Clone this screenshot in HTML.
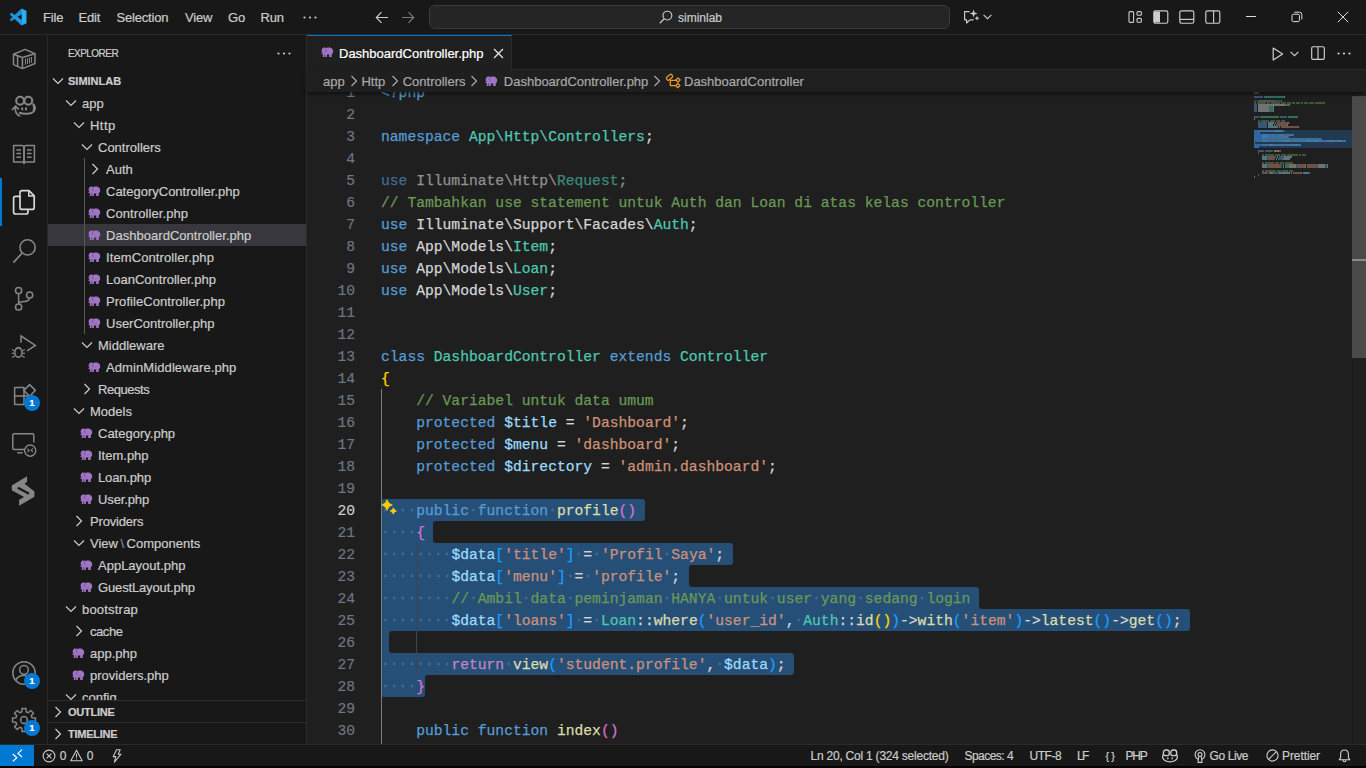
<!DOCTYPE html>
<html lang="en"><head><meta charset="utf-8"><title>DashboardController.php - siminlab - Visual Studio Code</title>
<style>
*{box-sizing:border-box;margin:0;padding:0}
html,body{width:1366px;height:768px;overflow:hidden;background:#000}
body{font-family:"Liberation Sans",sans-serif;font-size:13px;color:#cccccc;position:relative;-webkit-text-stroke:0.2px currentColor}
.a{position:absolute}
svg{display:block;overflow:visible}
#title{position:absolute;left:0;top:0;width:1366px;height:35px;background:#181818;border-bottom:1px solid #2b2b2b}
#activity{position:absolute;left:0;top:35px;width:48px;height:709px;background:#181818;border-right:1px solid #2b2b2b}
#side{position:absolute;left:48px;top:35px;width:259px;height:709px;background:#181818;border-right:1px solid #2b2b2b;overflow:hidden}
#tabs{position:absolute;left:307px;top:35px;width:1059px;height:35px;background:#181818;border-bottom:1px solid #2b2b2b}
#crumbs{position:absolute;left:307px;top:70px;width:1059px;height:22px;background:#1f1f1f;z-index:5;color:#a9a9a9;box-shadow:0 3px 4px -1px rgba(0,0,0,.55)}
#editor{position:absolute;left:307px;top:92px;width:1059px;height:652px;background:#1f1f1f;overflow:hidden}
#status{position:absolute;left:0;top:744px;width:1366px;height:22px;background:#181818;border-top:1px solid #2b2b2b;font-size:12px;color:#cccccc}
.menu{position:absolute;top:0;height:35px;line-height:35px;font-size:13px;color:#cccccc;white-space:nowrap;letter-spacing:-0.18px}
.row{position:absolute;left:0;width:258px;height:22px;line-height:22px;white-space:nowrap;color:#cccccc;font-size:13px}
.row .t{position:absolute;top:1px}
.row svg{position:absolute}
.ln{-webkit-text-stroke:0.2px currentColor;position:absolute;left:0;width:48px;text-align:right;height:22px;line-height:22px;color:#6e7681;font-family:"Liberation Mono",monospace;font-size:14.66px}
.cl{-webkit-text-stroke:0.25px currentColor;position:absolute;left:74px;height:22px;line-height:22px;white-space:pre;font-family:"Liberation Mono",monospace;font-size:14.66px;color:#d4d4d4}
.sel{position:absolute;background:#264f78;height:22px}
.k{color:#569cd6}.c{color:#4ec9b0}.v{color:#9cdcfe}.s{color:#ce9178}.m{color:#6a9955}.f{color:#dcdcaa}.r{color:#c586c0}
.b1{color:#ffd700}.b2{color:#da70d6}.b3{color:#179fff}
.w{color:rgba(255,255,255,.16);font-weight:bold;position:relative;top:-1px}
.st{position:absolute;top:1px;height:21px;line-height:21px;white-space:nowrap}
</style></head>
<body>

<svg width="0" height="0" style="position:absolute"><defs>
<symbol id="php" viewBox="0 0 24 20"><path d="M4 1.5 C6.5 0.3 9 0.8 10.5 2 C13 0.8 17 0.8 19.5 2 C22.5 3.5 24 6.5 23.6 9.5 C23.4 11.5 22 13 20.8 13.6 L20.7 19.4 L15.7 19.4 L15.7 14.6 L11.4 14.6 L11.3 19.4 L7.9 19.4 L7.9 14.4 L6.8 14.2 L6.7 19.4 L3.4 19.4 L3.4 13 C2.4 13.4 1.2 13.4 0.4 12.6 L1.2 11.2 C1.8 11.6 2.4 11.4 2.6 10.8 C0.6 8.8 0.2 4.5 4 1.5 Z"/><path d="M10.6 2.6 C7.6 4.6 7.6 8.6 11 9" fill="none" stroke="#181818" stroke-opacity=".5" stroke-width="1.1"/></symbol>
<symbol id="cd" viewBox="0 0 16 16"><path d="M3 5.5 L8 10.5 L13 5.5" fill="none" stroke="currentColor" stroke-width="1.2"/></symbol>
<symbol id="cr" viewBox="0 0 16 16"><path d="M5.5 3 L10.5 8 L5.5 13" fill="none" stroke="currentColor" stroke-width="1.2"/></symbol>
</defs></svg>

<div id="title"><svg class="a" style="left:9px;top:8px" width="18" height="18" viewBox="0 0 18 18">
<path d="M0.9 11.7 L2.3 13.1 L12.9 5.8 L12.9 0.9 L12 1.3 Z" fill="#1f8fd8" stroke="#1f8fd8" stroke-width=".5" stroke-linejoin="round"/>
<path d="M2.3 4.9 L0.9 6.3 L12 16.7 L12.9 17.05 L12.9 12.3 Z" fill="#2197e2" stroke="#2197e2" stroke-width=".5" stroke-linejoin="round"/>
<path d="M12.9 0.9 L17.2 2.9 L17.2 15.2 L12.9 17.05 Z" fill="#2bacf6" stroke="#2bacf6" stroke-width=".5" stroke-linejoin="round"/></svg><div class="menu" style="left:43px">File</div><div class="menu" style="left:78.5px">Edit</div><div class="menu" style="left:116.5px">Selection</div><div class="menu" style="left:185px">View</div><div class="menu" style="left:228px">Go</div><div class="menu" style="left:260.5px">Run</div><svg class="a" style="left:303px;top:16px" width="14" height="3" viewBox="0 0 14 3"><circle cx="1.5" cy="1.5" r="1.1" fill="#ccc"/><circle cx="7" cy="1.5" r="1.1" fill="#ccc"/><circle cx="12.5" cy="1.5" r="1.1" fill="#ccc"/></svg><svg class="a" style="left:375px;top:11px" width="14" height="13" viewBox="0 0 14 13"><path d="M13 6.5 H1.5 M6.5 1.2 L1.3 6.5 L6.5 11.8" fill="none" stroke="#cccccc" stroke-width="1.15"/></svg><svg class="a" style="left:401px;top:11px" width="14" height="13" viewBox="0 0 14 13"><path d="M1 6.5 H12.5 M7.5 1.2 L12.7 6.5 L7.5 11.8" fill="none" stroke="#7a7a7a" stroke-width="1.15"/></svg><div class="a" style="left:429px;top:5px;width:521px;height:24px;border:1px solid #3a3a3a;border-radius:6px;background:#252525"></div><svg class="a" style="left:659px;top:10px" width="14" height="14" viewBox="0 0 14 14"><circle cx="8.4" cy="5.6" r="4.4" fill="none" stroke="#c8c8c8" stroke-width="1.15"/><path d="M5.2 8.8 L0.8 13.2" stroke="#c8c8c8" stroke-width="1.25" fill="none"/></svg><div class="a" style="left:678px;top:1px;height:35px;line-height:35px;font-size:12px;color:#cccccc" id="cc">siminlab</div><svg class="a" style="left:963px;top:9px" width="17" height="16" viewBox="0 0 17 16">
<path d="M6.5 2.6 H1.6 V10.8 H3.6 V14 L7 10.8 H10.6" fill="none" stroke="#cccccc" stroke-width="1.15" stroke-linejoin="round"/>
<path d="M10.6 0.4 L11.6 3.4 L14.6 4.4 L11.6 5.4 L10.6 8.4 L9.6 5.4 L6.6 4.4 L9.6 3.4 Z" fill="#cccccc"/>
<path d="M14 6.6 L14.7 8.5 L16.6 9.2 L14.7 9.9 L14 11.8 L13.3 9.9 L11.4 9.2 L13.3 8.5 Z" fill="#cccccc"/></svg><svg class="a" style="left:983px;top:14px" width="9" height="6" viewBox="0 0 9 6"><path d="M0.6 0.8 L4.5 4.7 L8.4 0.8" fill="none" stroke="#cccccc" stroke-width="1.1"/></svg><svg class="a" style="left:1128px;top:10px" width="15" height="14" viewBox="0 0 15 14"><rect x="1" y="1.6" width="4.6" height="10.8" rx="1" fill="none" stroke="#cccccc" stroke-width="1.1"/><rect x="9" y="1.6" width="4.4" height="3.6" rx="1" fill="none" stroke="#cccccc" stroke-width="1.1"/><rect x="9" y="8.4" width="4.4" height="3.8" rx="1" fill="none" stroke="#cccccc" stroke-width="1.1"/></svg><svg class="a" style="left:1153px;top:10px" width="16" height="14" viewBox="0 0 16 14"><rect x="0.8" y="0.8" width="14" height="12.4" rx="1.6" fill="none" stroke="#cccccc" stroke-width="1.15"/><path d="M1 1.5 H7 V12.5 H1 Z" fill="#cccccc"/></svg><svg class="a" style="left:1179px;top:10px" width="16" height="14" viewBox="0 0 16 14"><rect x="0.8" y="0.8" width="14" height="12.4" rx="1.6" fill="none" stroke="#cccccc" stroke-width="1.15"/><path d="M1 9.4 H15" stroke="#cccccc" stroke-width="1.15"/></svg><svg class="a" style="left:1205px;top:10px" width="16" height="14" viewBox="0 0 16 14"><rect x="0.8" y="0.8" width="14" height="12.4" rx="1.6" fill="none" stroke="#cccccc" stroke-width="1.15"/><path d="M8.6 1 V13" stroke="#cccccc" stroke-width="1.15"/></svg><div class="a" style="left:1246px;top:16px;width:10px;height:1px;background:#dddddd"></div><svg class="a" style="left:1291px;top:11px" width="12" height="12" viewBox="0 0 12 12"><rect x="1" y="3.2" width="7.4" height="7.4" rx="1.3" fill="none" stroke="#dddddd" stroke-width="1"/><path d="M3.4 1.2 H8.6 Q10.8 1.2 10.8 3.4 V8.4" fill="none" stroke="#dddddd" stroke-width="1"/></svg><svg class="a" style="left:1337px;top:11px" width="12" height="12" viewBox="0 0 12 12"><path d="M0.8 0.8 L11.2 11.2 M11.2 0.8 L0.8 11.2" stroke="#dddddd" stroke-width="1" fill="none"/></svg></div>
<div id="activity"><svg class="a" style="left:12px;top:13px" width="24" height="22" viewBox="0 0 24 22">
<path d="M1.5 6.2 L13.1 1.4 L23 5.7 L23 15.5 L10.4 20.6 L1.5 16.6 Z" fill="none" stroke="#868686" stroke-width="1.5" stroke-linejoin="round"/>
<path d="M1.5 6.2 L10.4 9.4 L23 5.7 M10.4 9.4 V20.6" fill="none" stroke="#868686" stroke-width="1.6" stroke-linejoin="round"/>
<path d="M5.6 8 V18.2" stroke="#868686" stroke-width="1.5"/>
<path d="M13.5 10.8 V16.8 M15.5 10.2 V16.1 M17.5 9.6 V15.4 M19.5 9 V14.7" stroke="#868686" stroke-width="1.05"/></svg><svg class="a" style="left:11px;top:59px" width="25" height="25" viewBox="0 0 25 25">
<circle cx="9.1" cy="6.7" r="3.9" fill="none" stroke="#868686" stroke-width="2.1"/>
<circle cx="17.3" cy="6.7" r="3.9" fill="none" stroke="#868686" stroke-width="2.1"/>
<path d="M21.6 9.6 C24.4 11.4 24.2 15.6 22.6 17.6 C20.4 20 13.6 20.6 8 18.8" fill="none" stroke="#868686" stroke-width="2"/>
<path d="M22.4 11 C23.6 12.6 23.6 15.2 22.4 16.8" fill="none" stroke="#868686" stroke-width="2.4"/>
<path d="M11.2 13.4 V16.2 M15 13.4 V16.2" stroke="#868686" stroke-width="2"/>
<path d="M4.5 12.8 C3.8 17 5.2 20.8 9.4 22" fill="none" stroke="#868686" stroke-width="1.7"/>
<path d="M1 16 L4.4 12.3 L7.9 15.3" fill="none" stroke="#868686" stroke-width="1.7"/></svg><svg class="a" style="left:12px;top:108px" width="24" height="23" viewBox="0 0 24 23">
<path d="M1.6 2.4 H10 Q12 2.4 12 4.4 V20.6 Q12 19 10 19 H1.6 Z" fill="none" stroke="#868686" stroke-width="1.5" stroke-linejoin="round"/>
<path d="M22.4 2.4 H14 Q12 2.4 12 4.4 V20.6 Q12 19 14 19 H22.4 Z" fill="none" stroke="#868686" stroke-width="1.5" stroke-linejoin="round"/>
<path d="M4.4 7 H9 M4.4 10.6 H9 M4.4 14.2 H9 M15 7 H19.6 M15 10.6 H19.6 M15 14.2 H19.6" stroke="#868686" stroke-width="1.5"/></svg><div class="a" style="left:0;top:143px;width:2px;height:48px;background:#0078d4"></div><svg class="a" style="left:12px;top:154px" width="24" height="27" viewBox="0 0 24 27">
<path d="M8 5.6 V3.6 Q8 1.6 10 1.6 H17 L22.2 6.8 V18.4 Q22.2 20.4 20.2 20.4 H16.4" fill="none" stroke="#d7d7d7" stroke-width="1.7" stroke-linejoin="round"/>
<path d="M16.8 1.8 V7 H22" fill="none" stroke="#d7d7d7" stroke-width="1.5"/>
<path d="M3.6 7.4 H8 V18.4 Q8 20.4 10 20.4 H16 V23 Q16 25 14 25 H3.6 Q1.6 25 1.6 23 V9.4 Q1.6 7.4 3.6 7.4 Z" fill="none" stroke="#d7d7d7" stroke-width="1.7" stroke-linejoin="round"/>
<path d="M8 7.4 V5.6" stroke="#d7d7d7" stroke-width="1.7"/></svg><svg class="a" style="left:12px;top:203px" width="25" height="26" viewBox="0 0 25 26">
<circle cx="15.6" cy="9.4" r="7.6" fill="none" stroke="#868686" stroke-width="1.6"/>
<path d="M10.2 15 L1.4 24.6" stroke="#868686" stroke-width="1.7" fill="none"/></svg><svg class="a" style="left:14px;top:251px" width="20" height="26" viewBox="0 0 20 26">
<circle cx="4.6" cy="4.6" r="3.1" fill="none" stroke="#868686" stroke-width="1.5"/>
<circle cx="4.6" cy="21" r="3.1" fill="none" stroke="#868686" stroke-width="1.5"/>
<circle cx="15.6" cy="9" r="3.1" fill="none" stroke="#868686" stroke-width="1.5"/>
<path d="M4.6 7.8 V17.8 M15.4 12.2 Q14.6 15.4 10 15.6 Q5.4 15.8 4.8 17.8" fill="none" stroke="#868686" stroke-width="1.5"/></svg><svg class="a" style="left:11px;top:299px" width="26" height="26" viewBox="0 0 26 26">
<path d="M10 8.8 V2 L24.4 11.4 L16 16.8" fill="none" stroke="#868686" stroke-width="1.5" stroke-linejoin="miter"/>
<ellipse cx="7.4" cy="18.6" rx="3.6" ry="4.6" fill="none" stroke="#868686" stroke-width="1.5"/>
<path d="M4.6 15 Q7.4 11.8 10.2 15" fill="none" stroke="#868686" stroke-width="1.4"/>
<path d="M3.8 17 L1 15.4 M3.6 19.4 H0.8 M4 21.8 L1.2 23.6 M11 17 L13.8 15.4 M11.2 19.4 H14 M10.8 21.8 L13.6 23.6" stroke="#868686" stroke-width="1.2"/></svg><svg class="a" style="left:13px;top:348px" width="24" height="24" viewBox="0 0 24 24">
<path d="M1.6 4.6 H11 V21.4 H1.6 Z M1.6 13 H11 M11 13 H19.4 V21.4 H11" fill="none" stroke="#868686" stroke-width="1.5" stroke-linejoin="round"/>
<path d="M16.6 1.6 L22.4 7.4 L16.6 13.2 L10.8 7.4 Z" fill="#181818" stroke="#868686" stroke-width="1.5" stroke-linejoin="round"/></svg><div class="a" style="left:24px;top:360px;width:16px;height:16px;border-radius:8px;background:#0078d4"></div><div class="a" style="left:24px;top:360px;width:16px;height:16px;line-height:16px;text-align:center;font-size:9.5px;font-weight:bold;color:#fff">1</div><svg class="a" style="left:11px;top:397px" width="26" height="26" viewBox="0 0 26 26">
<path d="M14 17.6 H3.2 Q1.8 17.6 1.8 16.2 V3.2 Q1.8 1.8 3.2 1.8 H21.4 Q22.8 1.8 22.8 3.2 V10.4" fill="none" stroke="#868686" stroke-width="1.5"/>
<path d="M6.2 20.8 H11.6" stroke="#868686" stroke-width="1.5"/>
<circle cx="19.2" cy="18.6" r="5.6" fill="#181818" stroke="#868686" stroke-width="1.4"/>
<path d="M16.4 16.6 L18.2 18.4 L16.4 20.2 M22 16.4 L20.2 18.2 L22 20" fill="none" stroke="#868686" stroke-width="1.1"/></svg><svg class="a" style="left:11px;top:440px" width="25" height="32" viewBox="0 0 25 32">
<path d="M16.06 1.29 L0.74 10.59 L0.74 15.24 L13.05 22.08 L8.13 24.81 L8.13 30.83 L23.45 21.8 L23.45 16.6 L13.6 8.68 L16.06 6.76 Z" fill="#868686"/>
<path d="M6.9 12.7 L18 18.8" stroke="#181818" stroke-width="2.3"/></svg><svg class="a" style="left:11px;top:624.5px" width="26" height="26" viewBox="0 0 26 26">
<circle cx="13" cy="13" r="11.2" fill="none" stroke="#868686" stroke-width="1.5"/>
<circle cx="13" cy="9.8" r="4.4" fill="none" stroke="#868686" stroke-width="1.5"/>
<path d="M4.8 20.8 Q6 15.4 13 15.4 Q20 15.4 21.2 20.8" fill="none" stroke="#868686" stroke-width="1.5"/></svg><div class="a" style="left:24px;top:638px;width:16px;height:16px;border-radius:8px;background:#0078d4"></div><div class="a" style="left:24px;top:638px;width:16px;height:16px;line-height:16px;text-align:center;font-size:9.5px;font-weight:bold;color:#fff">1</div><svg class="a" style="left:11px;top:672px" width="26" height="26" viewBox="0 0 26 26"><path d="M10.84 4.88 L11.04 1.57 L14.96 1.57 L15.16 4.88 L17.21 5.73 L19.70 3.53 L22.47 6.30 L20.27 8.79 L21.12 10.84 L24.43 11.04 L24.43 14.96 L21.12 15.16 L20.27 17.21 L22.47 19.70 L19.70 22.47 L17.21 20.27 L15.16 21.12 L14.96 24.43 L11.04 24.43 L10.84 21.12 L8.79 20.27 L6.30 22.47 L3.53 19.70 L5.73 17.21 L4.88 15.16 L1.57 14.96 L1.57 11.04 L4.88 10.84 L5.73 8.79 L3.53 6.30 L6.30 3.53 L8.79 5.73 Z" fill="none" stroke="#868686" stroke-width="1.5" stroke-linejoin="round"/><circle cx="13" cy="13" r="3.4" fill="none" stroke="#868686" stroke-width="1.5"/></svg><div class="a" style="left:24px;top:685px;width:16px;height:16px;border-radius:8px;background:#0078d4"></div><div class="a" style="left:24px;top:685px;width:16px;height:16px;line-height:16px;text-align:center;font-size:9.5px;font-weight:bold;color:#fff">1</div></div>
<div id="side"><div class="a" style="left:20px;top:0;height:35px;line-height:37px;font-size:10px;letter-spacing:-0.55px;color:#cccccc" id="explbl">EXPLORER</div><svg class="a" style="left:229px;top:17px" width="14" height="3" viewBox="0 0 14 3"><circle cx="1.5" cy="1.5" r="1.1" fill="#ccc"/><circle cx="7" cy="1.5" r="1.1" fill="#ccc"/><circle cx="12.5" cy="1.5" r="1.1" fill="#ccc"/></svg><div class="row" style="top:35px;"><svg style="left:2px;top:3px;color:#cccccc" width="16" height="16"><use href="#cd"/></svg><span class="t" style="left:20px;top:0;font-weight:bold;font-size:11px">SIMINLAB</span></div><div class="row" style="top:57px;"><svg style="left:15px;top:3px;color:#cccccc" width="16" height="16"><use href="#cd"/></svg><span class="t" style="left:34px;letter-spacing:0px">app</span></div><div class="row" style="top:79px;"><svg style="left:23px;top:3px;color:#cccccc" width="16" height="16"><use href="#cd"/></svg><span class="t" style="left:42px;letter-spacing:0.45px">Http</span></div><div class="row" style="top:101px;"><svg style="left:31px;top:3px;color:#cccccc" width="16" height="16"><use href="#cd"/></svg><span class="t" style="left:50px;letter-spacing:0px">Controllers</span></div><div class="row" style="top:123px;"><svg style="left:39px;top:3px;color:#cccccc" width="16" height="16"><use href="#cr"/></svg><span class="t" style="left:58px;letter-spacing:0px">Auth</span></div><div class="row" style="top:145px;"><svg style="left:40px;top:6px" width="12.5" height="10.4" fill="#a074c4"><use href="#php"/></svg><span class="t" style="left:58px;letter-spacing:0px">CategoryController.php</span></div><div class="row" style="top:167px;"><svg style="left:40px;top:6px" width="12.5" height="10.4" fill="#a074c4"><use href="#php"/></svg><span class="t" style="left:58px;letter-spacing:0.086px">Controller.php</span></div><div class="row" style="top:189px;background:#37373d;"><svg style="left:40px;top:6px" width="12.5" height="10.4" fill="#a074c4"><use href="#php"/></svg><span class="t" style="left:58px;letter-spacing:0.035px">DashboardController.php</span></div><div class="row" style="top:211px;"><svg style="left:40px;top:6px" width="12.5" height="10.4" fill="#a074c4"><use href="#php"/></svg><span class="t" style="left:58px;letter-spacing:0.1px">ItemController.php</span></div><div class="row" style="top:233px;"><svg style="left:40px;top:6px" width="12.5" height="10.4" fill="#a074c4"><use href="#php"/></svg><span class="t" style="left:58px;letter-spacing:0px">LoanController.php</span></div><div class="row" style="top:255px;"><svg style="left:40px;top:6px" width="12.5" height="10.4" fill="#a074c4"><use href="#php"/></svg><span class="t" style="left:58px;letter-spacing:0.057px">ProfileController.php</span></div><div class="row" style="top:277px;"><svg style="left:40px;top:6px" width="12.5" height="10.4" fill="#a074c4"><use href="#php"/></svg><span class="t" style="left:58px;letter-spacing:0px">UserController.php</span></div><div class="row" style="top:299px;"><svg style="left:31px;top:3px;color:#cccccc" width="16" height="16"><use href="#cd"/></svg><span class="t" style="left:50px;letter-spacing:0px">Middleware</span></div><div class="row" style="top:321px;"><svg style="left:40px;top:6px" width="12.5" height="10.4" fill="#a074c4"><use href="#php"/></svg><span class="t" style="left:58px;letter-spacing:0.095px">AdminMiddleware.php</span></div><div class="row" style="top:343px;"><svg style="left:31px;top:3px;color:#cccccc" width="16" height="16"><use href="#cr"/></svg><span class="t" style="left:50px;letter-spacing:-0.45px">Requests</span></div><div class="row" style="top:365px;"><svg style="left:23px;top:3px;color:#cccccc" width="16" height="16"><use href="#cd"/></svg><span class="t" style="left:42px;letter-spacing:0px">Models</span></div><div class="row" style="top:387px;"><svg style="left:32px;top:6px" width="12.5" height="10.4" fill="#a074c4"><use href="#php"/></svg><span class="t" style="left:50px;letter-spacing:0px">Category.php</span></div><div class="row" style="top:409px;"><svg style="left:32px;top:6px" width="12.5" height="10.4" fill="#a074c4"><use href="#php"/></svg><span class="t" style="left:50px;letter-spacing:0px">Item.php</span></div><div class="row" style="top:431px;"><svg style="left:32px;top:6px" width="12.5" height="10.4" fill="#a074c4"><use href="#php"/></svg><span class="t" style="left:50px;letter-spacing:-0.15px">Loan.php</span></div><div class="row" style="top:453px;"><svg style="left:32px;top:6px" width="12.5" height="10.4" fill="#a074c4"><use href="#php"/></svg><span class="t" style="left:50px;letter-spacing:-0.125px">User.php</span></div><div class="row" style="top:475px;"><svg style="left:23px;top:3px;color:#cccccc" width="16" height="16"><use href="#cr"/></svg><span class="t" style="left:42px;letter-spacing:-0.178px">Providers</span></div><div class="row" style="top:497px;"><svg style="left:23px;top:3px;color:#cccccc" width="16" height="16"><use href="#cd"/></svg><span class="t" style="left:42px;letter-spacing:0px">View<span style="color:#8a8a8a;padding:0 2.5px">\</span>Components</span></div><div class="row" style="top:519px;"><svg style="left:32px;top:6px" width="12.5" height="10.4" fill="#a074c4"><use href="#php"/></svg><span class="t" style="left:50px;letter-spacing:0px">AppLayout.php</span></div><div class="row" style="top:541px;"><svg style="left:32px;top:6px" width="12.5" height="10.4" fill="#a074c4"><use href="#php"/></svg><span class="t" style="left:50px;letter-spacing:-0.147px">GuestLayout.php</span></div><div class="row" style="top:563px;"><svg style="left:15px;top:3px;color:#cccccc" width="16" height="16"><use href="#cd"/></svg><span class="t" style="left:34px;letter-spacing:0.2px">bootstrap</span></div><div class="row" style="top:585px;"><svg style="left:23px;top:3px;color:#cccccc" width="16" height="16"><use href="#cr"/></svg><span class="t" style="left:42px;letter-spacing:-0.44px">cache</span></div><div class="row" style="top:607px;"><svg style="left:24px;top:6px" width="12.5" height="10.4" fill="#a074c4"><use href="#php"/></svg><span class="t" style="left:42px;letter-spacing:0px">app.php</span></div><div class="row" style="top:629px;"><svg style="left:24px;top:6px" width="12.5" height="10.4" fill="#a074c4"><use href="#php"/></svg><span class="t" style="left:42px;letter-spacing:0px">providers.php</span></div><div class="row" style="top:651px;"><svg style="left:15px;top:3px;color:#cccccc" width="16" height="16"><use href="#cd"/></svg><span class="t" style="left:34px;letter-spacing:0px">config</span></div><div class="a" style="left:36px;top:123px;width:1px;height:176px;background:#585858"></div><div class="a" style="left:0;top:665px;width:258px;height:45px;background:#181818"></div><div class="a" style="left:0;top:665px;width:258px;height:1px;background:#2b2b2b"></div><svg class="a" style="left:2px;top:669px;color:#cccccc" width="16" height="16"><use href="#cr"/></svg><div class="a" style="left:20px;top:666px;height:22px;line-height:22px;font-weight:bold;font-size:11px;letter-spacing:-0.25px;color:#cccccc">OUTLINE</div><div class="a" style="left:0;top:687px;width:258px;height:1px;background:#2b2b2b"></div><svg class="a" style="left:2px;top:691px;color:#cccccc" width="16" height="16"><use href="#cr"/></svg><div class="a" style="left:20px;top:688px;height:22px;line-height:22px;font-weight:bold;font-size:11px;letter-spacing:-0.25px;color:#cccccc">TIMELINE</div></div>
<div id="tabs"><div class="a" style="left:0;top:0;width:205px;height:35px;background:#1f1f1f;border-right:1px solid #2b2b2b;border-top:1px solid #0078d4"></div><svg class="a" style="left:13.5px;top:12px" width="12.5" height="10.4" fill="#a074c4"><use href="#php"/></svg><div class="a" id="tabtxt" style="left:32px;top:1px;height:35px;line-height:36px;font-size:13px;color:#ffffff;white-space:nowrap">DashboardController.php</div><svg class="a" style="left:186px;top:12.5px" width="11" height="11" viewBox="0 0 11 11"><path d="M1 1 L10 10 M10 1 L1 10" stroke="#e6e6e6" stroke-width="1.3" fill="none"/></svg><svg class="a" style="left:965px;top:12px" width="12" height="14" viewBox="0 0 12 14"><path d="M1.2 1 L10.6 7 L1.2 13 Z" fill="none" stroke="#d0d0d0" stroke-width="1.2" stroke-linejoin="round"/></svg><svg class="a" style="left:983px;top:16px" width="9" height="6" viewBox="0 0 9 6"><path d="M0.6 0.8 L4.5 4.7 L8.4 0.8" fill="none" stroke="#d0d0d0" stroke-width="1.1"/></svg><svg class="a" style="left:1003.5px;top:11px" width="14" height="14" viewBox="0 0 14 14"><rect x="0.7" y="0.7" width="12.6" height="12.6" rx="1.4" fill="none" stroke="#d0d0d0" stroke-width="1.15"/><path d="M7 1 V13" stroke="#d0d0d0" stroke-width="1.15"/></svg><svg class="a" style="left:1029.5px;top:17px" width="14" height="3" viewBox="0 0 14 3"><circle cx="1.5" cy="1.5" r="1.1" fill="#d0d0d0"/><circle cx="7" cy="1.5" r="1.1" fill="#d0d0d0"/><circle cx="12.5" cy="1.5" r="1.1" fill="#d0d0d0"/></svg></div><div id="crumbs"><div class="a bc" id="bc0" style="left:16px;top:1px;height:22px;line-height:22px;white-space:nowrap">app</div><svg class="a" style="left:38.5px;top:3px;color:#a9a9a9" width="16" height="16"><use href="#cr"/></svg><div class="a bc" id="bc1" style="left:54.39999999999998px;top:1px;height:22px;line-height:22px;white-space:nowrap">Http</div><svg class="a" style="left:80px;top:3px;color:#a9a9a9" width="16" height="16"><use href="#cr"/></svg><div class="a bc" id="bc2" style="left:95.69999999999999px;top:1px;height:22px;line-height:22px;white-space:nowrap">Controllers</div><svg class="a" style="left:158.5px;top:3px;color:#a9a9a9" width="16" height="16"><use href="#cr"/></svg><svg class="a" style="left:178px;top:6px" width="12.5" height="10.4" fill="#a074c4"><use href="#php"/></svg><div class="a bc" id="bc3" style="left:196.8px;top:1px;height:22px;line-height:22px;white-space:nowrap">DashboardController.php</div><svg class="a" style="left:341.79999999999995px;top:3px;color:#a9a9a9" width="16" height="16"><use href="#cr"/></svg><svg class="a" style="left:357.5px;top:3px" width="17" height="17" viewBox="0 0 17 17"><g fill="none" stroke="#ee9d28" stroke-width="1.25" stroke-linejoin="round">
<rect x="1.2" y="2.5" width="6.6" height="3.5" rx="1.2" transform="rotate(-40 4.5 4.25)"/>
<path d="M13 4.9 L15.1 7 L13 9.1 L10.9 7 Z"/><path d="M12.8 10.5 L14.9 12.6 L12.8 14.7 L10.7 12.6 Z"/>
<path d="M5.3 7.3 V12.6 H10.7 M5.3 7.3 H10.9"/></g></svg><div class="a bc" id="bc4" style="left:377px;top:1px;height:22px;line-height:22px;white-space:nowrap">DashboardController</div></div><div id="editor"><div class="sel" style="left:74px;top:407px;width:263.5px;border-radius:3px 3px 3px 0px"></div><div class="sel" style="left:74px;top:429px;width:52.4px;border-radius:0px 0px 0px 0px"></div><div class="sel" style="left:74px;top:451px;width:351.5px;border-radius:0px 3px 3px 0px"></div><div class="sel" style="left:74px;top:473px;width:307.5px;border-radius:0px 0px 0px 0px"></div><div class="sel" style="left:74px;top:495px;width:597.8px;border-radius:0px 3px 0px 0px"></div><div class="sel" style="left:74px;top:517px;width:808.9px;border-radius:0px 3px 3px 0px"></div><div class="sel" style="left:74px;top:539px;width:8.4px;border-radius:0px 0px 0px 0px"></div><div class="sel" style="left:74px;top:561px;width:413.1px;border-radius:0px 3px 3px 0px"></div><div class="sel" style="left:74px;top:583px;width:44.0px;border-radius:0px 0px 3px 3px"></div><div class="a" style="left:126.4px;top:429px;width:3px;height:3px;background:#264f78"></div><div class="a" style="left:126.4px;top:429px;width:3px;height:3px;background:#1f1f1f;border-top-left-radius:3px"></div><div class="a" style="left:126.4px;top:448px;width:3px;height:3px;background:#264f78"></div><div class="a" style="left:126.4px;top:448px;width:3px;height:3px;background:#1f1f1f;border-bottom-left-radius:3px"></div><div class="a" style="left:381.5px;top:473px;width:3px;height:3px;background:#264f78"></div><div class="a" style="left:381.5px;top:473px;width:3px;height:3px;background:#1f1f1f;border-top-left-radius:3px"></div><div class="a" style="left:381.5px;top:492px;width:3px;height:3px;background:#264f78"></div><div class="a" style="left:381.5px;top:492px;width:3px;height:3px;background:#1f1f1f;border-bottom-left-radius:3px"></div><div class="a" style="left:671.8px;top:514px;width:3px;height:3px;background:#264f78"></div><div class="a" style="left:671.8px;top:514px;width:3px;height:3px;background:#1f1f1f;border-bottom-left-radius:3px"></div><div class="a" style="left:82.4px;top:539px;width:3px;height:3px;background:#264f78"></div><div class="a" style="left:82.4px;top:539px;width:3px;height:3px;background:#1f1f1f;border-top-left-radius:3px"></div><div class="a" style="left:82.4px;top:558px;width:3px;height:3px;background:#264f78"></div><div class="a" style="left:82.4px;top:558px;width:3px;height:3px;background:#1f1f1f;border-bottom-left-radius:3px"></div><div class="a" style="left:118.0px;top:583px;width:3px;height:3px;background:#264f78"></div><div class="a" style="left:118.0px;top:583px;width:3px;height:3px;background:#1f1f1f;border-top-left-radius:3px"></div><div class="a" style="left:74px;top:297px;width:1px;height:440px;background:#7c7c7c"></div><div class="a" style="left:109px;top:451px;width:1px;height:132px;background:#3e4651"></div><div class="a" style="left:109px;top:671px;width:1px;height:220px;background:#404040"></div><svg class="a" style="left:74px;top:407px" width="18" height="17" viewBox="0 0 18 17">
<path d="M6.05 0.75 Q7.09 4.91 11.25 5.95 Q7.09 6.99 6.05 11.15 Q5.01 6.99 0.8499999999999996 5.95 Q5.01 4.91 6.05 0.75 Z" fill="#ffcc00" stroke="#ffcc00" stroke-width="0.9" stroke-linejoin="round"/>
<path d="M12.3 8.8 Q12.940000000000001 11.36 15.5 12.0 Q12.940000000000001 12.64 12.3 15.2 Q11.66 12.64 9.100000000000001 12.0 Q11.66 11.36 12.3 8.8 Z" fill="#ffcc00" stroke="#ffcc00" stroke-width="0.7" stroke-linejoin="round"/></svg><div class="ln" style="top:-10px;color:#6e7681">1</div><div class="cl" style="top:-10px;"><span class="k">&lt;?php</span></div><div class="ln" style="top:12px;color:#6e7681">2</div><div class="ln" style="top:34px;color:#6e7681">3</div><div class="cl" style="top:34px;"><span class="k">namespace</span> <span class="c">App\Http\Controllers</span>;</div><div class="ln" style="top:56px;color:#6e7681">4</div><div class="ln" style="top:78px;color:#6e7681">5</div><div class="cl" style="top:78px;opacity:.62;"><span class="k">use</span> Illuminate\Http\<span class="c">Request</span>;</div><div class="ln" style="top:100px;color:#6e7681">6</div><div class="cl" style="top:100px;"><span class="m">// Tambahkan use statement untuk Auth dan Loan di atas kelas controller</span></div><div class="ln" style="top:122px;color:#6e7681">7</div><div class="cl" style="top:122px;"><span class="k">use</span> Illuminate\Support\Facades\<span class="c">Auth</span>;</div><div class="ln" style="top:144px;color:#6e7681">8</div><div class="cl" style="top:144px;"><span class="k">use</span> App\Models\<span class="c">Item</span>;</div><div class="ln" style="top:166px;color:#6e7681">9</div><div class="cl" style="top:166px;"><span class="k">use</span> App\Models\<span class="c">Loan</span>;</div><div class="ln" style="top:188px;color:#6e7681">10</div><div class="cl" style="top:188px;"><span class="k">use</span> App\Models\<span class="c">User</span>;</div><div class="ln" style="top:210px;color:#6e7681">11</div><div class="ln" style="top:232px;color:#6e7681">12</div><div class="ln" style="top:254px;color:#6e7681">13</div><div class="cl" style="top:254px;"><span class="k">class</span> <span class="c">DashboardController</span> <span class="k">extends</span> <span class="c">Controller</span></div><div class="ln" style="top:276px;color:#6e7681">14</div><div class="cl" style="top:276px;"><span class="b1">{</span></div><div class="ln" style="top:298px;color:#6e7681">15</div><div class="cl" style="top:298px;">    <span class="m">// Variabel untuk data umum</span></div><div class="ln" style="top:320px;color:#6e7681">16</div><div class="cl" style="top:320px;">    <span class="k">protected</span> <span class="v">$title</span> = <span class="s">'Dashboard'</span>;</div><div class="ln" style="top:342px;color:#6e7681">17</div><div class="cl" style="top:342px;">    <span class="k">protected</span> <span class="v">$menu</span> = <span class="s">'dashboard'</span>;</div><div class="ln" style="top:364px;color:#6e7681">18</div><div class="cl" style="top:364px;">    <span class="k">protected</span> <span class="v">$directory</span> = <span class="s">'admin.dashboard'</span>;</div><div class="ln" style="top:386px;color:#6e7681">19</div><div class="ln" style="top:408px;color:#cccccc">20</div><div class="cl" style="top:408px;"><span class="w">·</span><span class="w">·</span><span class="w">·</span><span class="w">·</span><span class="k">public</span><span class="w">·</span><span class="k">function</span><span class="w">·</span><span class="f">profile</span><span class="b2">()</span></div><div class="ln" style="top:430px;color:#6e7681">21</div><div class="cl" style="top:430px;"><span class="w">·</span><span class="w">·</span><span class="w">·</span><span class="w">·</span><span class="b2">{</span></div><div class="ln" style="top:452px;color:#6e7681">22</div><div class="cl" style="top:452px;"><span class="w">·</span><span class="w">·</span><span class="w">·</span><span class="w">·</span><span class="w">·</span><span class="w">·</span><span class="w">·</span><span class="w">·</span><span class="v">$data</span><span class="b3">[</span><span class="s">'title'</span><span class="b3">]</span><span class="w">·</span>=<span class="w">·</span><span class="s">'Profil</span><span class="w">·</span><span class="s">Saya'</span>;</div><div class="ln" style="top:474px;color:#6e7681">23</div><div class="cl" style="top:474px;"><span class="w">·</span><span class="w">·</span><span class="w">·</span><span class="w">·</span><span class="w">·</span><span class="w">·</span><span class="w">·</span><span class="w">·</span><span class="v">$data</span><span class="b3">[</span><span class="s">'menu'</span><span class="b3">]</span><span class="w">·</span>=<span class="w">·</span><span class="s">'profile'</span>;</div><div class="ln" style="top:496px;color:#6e7681">24</div><div class="cl" style="top:496px;"><span class="w">·</span><span class="w">·</span><span class="w">·</span><span class="w">·</span><span class="w">·</span><span class="w">·</span><span class="w">·</span><span class="w">·</span><span class="m">//</span><span class="w">·</span><span class="m">Ambil</span><span class="w">·</span><span class="m">data</span><span class="w">·</span><span class="m">peminjaman</span><span class="w">·</span><span class="m">HANYA</span><span class="w">·</span><span class="m">untuk</span><span class="w">·</span><span class="m">user</span><span class="w">·</span><span class="m">yang</span><span class="w">·</span><span class="m">sedang</span><span class="w">·</span><span class="m">login</span></div><div class="ln" style="top:518px;color:#6e7681">25</div><div class="cl" style="top:518px;"><span class="w">·</span><span class="w">·</span><span class="w">·</span><span class="w">·</span><span class="w">·</span><span class="w">·</span><span class="w">·</span><span class="w">·</span><span class="v">$data</span><span class="b3">[</span><span class="s">'loans'</span><span class="b3">]</span><span class="w">·</span>=<span class="w">·</span><span class="c">Loan</span>::<span class="f">where</span><span class="b3">(</span><span class="s">'user_id'</span>,<span class="w">·</span><span class="c">Auth</span>::<span class="f">id</span><span class="b1">()</span><span class="b3">)</span>-&gt;<span class="f">with</span><span class="b3">(</span><span class="s">'item'</span><span class="b3">)</span>-&gt;<span class="f">latest</span><span class="b3">()</span>-&gt;<span class="f">get</span><span class="b3">()</span>;</div><div class="ln" style="top:540px;color:#6e7681">26</div><div class="ln" style="top:562px;color:#6e7681">27</div><div class="cl" style="top:562px;"><span class="w">·</span><span class="w">·</span><span class="w">·</span><span class="w">·</span><span class="w">·</span><span class="w">·</span><span class="w">·</span><span class="w">·</span><span class="r">return</span><span class="w">·</span><span class="f">view</span><span class="b3">(</span><span class="s">'student.profile'</span>,<span class="w">·</span><span class="v">$data</span><span class="b3">)</span>;</div><div class="ln" style="top:584px;color:#6e7681">28</div><div class="cl" style="top:584px;"><span class="w">·</span><span class="w">·</span><span class="w">·</span><span class="w">·</span><span class="b2">}</span></div><div class="ln" style="top:606px;color:#6e7681">29</div><div class="ln" style="top:628px;color:#6e7681">30</div><div class="cl" style="top:628px;">    <span class="k">public</span> <span class="k">function</span> <span class="f">index</span><span class="b2">()</span></div><div class="ln" style="top:650px;color:#6e7681">31</div><div class="cl" style="top:650px;">    <span class="b2">{</span></div><div class="a" style="left:947px;top:38px;width:98px;height:18px;background:#264f78;opacity:.55"></div><div class="a" style="left:947px;top:0px;width:5px;height:2px;background:#569cd6;opacity:0.45"></div><div class="a" style="left:947px;top:4px;width:9px;height:2px;background:#569cd6;opacity:0.45"></div><div class="a" style="left:957px;top:4px;width:20px;height:2px;background:#4ec9b0;opacity:0.45"></div><div class="a" style="left:977px;top:4px;width:1px;height:2px;background:#d4d4d4;opacity:0.45"></div><div class="a" style="left:947px;top:8px;width:3px;height:2px;background:#569cd6;opacity:0.28"></div><div class="a" style="left:951px;top:8px;width:16px;height:2px;background:#d4d4d4;opacity:0.28"></div><div class="a" style="left:967px;top:8px;width:7px;height:2px;background:#4ec9b0;opacity:0.28"></div><div class="a" style="left:974px;top:8px;width:1px;height:2px;background:#d4d4d4;opacity:0.28"></div><div class="a" style="left:947px;top:10px;width:2px;height:2px;background:#6a9955;opacity:0.45"></div><div class="a" style="left:950px;top:10px;width:9px;height:2px;background:#6a9955;opacity:0.45"></div><div class="a" style="left:960px;top:10px;width:3px;height:2px;background:#6a9955;opacity:0.45"></div><div class="a" style="left:964px;top:10px;width:9px;height:2px;background:#6a9955;opacity:0.45"></div><div class="a" style="left:974px;top:10px;width:5px;height:2px;background:#6a9955;opacity:0.45"></div><div class="a" style="left:980px;top:10px;width:4px;height:2px;background:#6a9955;opacity:0.45"></div><div class="a" style="left:985px;top:10px;width:3px;height:2px;background:#6a9955;opacity:0.45"></div><div class="a" style="left:989px;top:10px;width:4px;height:2px;background:#6a9955;opacity:0.45"></div><div class="a" style="left:994px;top:10px;width:2px;height:2px;background:#6a9955;opacity:0.45"></div><div class="a" style="left:997px;top:10px;width:4px;height:2px;background:#6a9955;opacity:0.45"></div><div class="a" style="left:1002px;top:10px;width:5px;height:2px;background:#6a9955;opacity:0.45"></div><div class="a" style="left:1008px;top:10px;width:10px;height:2px;background:#6a9955;opacity:0.45"></div><div class="a" style="left:947px;top:12px;width:3px;height:2px;background:#569cd6;opacity:0.45"></div><div class="a" style="left:951px;top:12px;width:27px;height:2px;background:#d4d4d4;opacity:0.45"></div><div class="a" style="left:978px;top:12px;width:4px;height:2px;background:#4ec9b0;opacity:0.45"></div><div class="a" style="left:982px;top:12px;width:1px;height:2px;background:#d4d4d4;opacity:0.45"></div><div class="a" style="left:947px;top:14px;width:3px;height:2px;background:#569cd6;opacity:0.45"></div><div class="a" style="left:951px;top:14px;width:11px;height:2px;background:#d4d4d4;opacity:0.45"></div><div class="a" style="left:962px;top:14px;width:4px;height:2px;background:#4ec9b0;opacity:0.45"></div><div class="a" style="left:966px;top:14px;width:1px;height:2px;background:#d4d4d4;opacity:0.45"></div><div class="a" style="left:947px;top:16px;width:3px;height:2px;background:#569cd6;opacity:0.45"></div><div class="a" style="left:951px;top:16px;width:11px;height:2px;background:#d4d4d4;opacity:0.45"></div><div class="a" style="left:962px;top:16px;width:4px;height:2px;background:#4ec9b0;opacity:0.45"></div><div class="a" style="left:966px;top:16px;width:1px;height:2px;background:#d4d4d4;opacity:0.45"></div><div class="a" style="left:947px;top:18px;width:3px;height:2px;background:#569cd6;opacity:0.45"></div><div class="a" style="left:951px;top:18px;width:11px;height:2px;background:#d4d4d4;opacity:0.45"></div><div class="a" style="left:962px;top:18px;width:4px;height:2px;background:#4ec9b0;opacity:0.45"></div><div class="a" style="left:966px;top:18px;width:1px;height:2px;background:#d4d4d4;opacity:0.45"></div><div class="a" style="left:947px;top:24px;width:5px;height:2px;background:#569cd6;opacity:0.45"></div><div class="a" style="left:953px;top:24px;width:19px;height:2px;background:#4ec9b0;opacity:0.45"></div><div class="a" style="left:973px;top:24px;width:7px;height:2px;background:#569cd6;opacity:0.45"></div><div class="a" style="left:981px;top:24px;width:10px;height:2px;background:#4ec9b0;opacity:0.45"></div><div class="a" style="left:947px;top:26px;width:1px;height:2px;background:#ffd700;opacity:0.45"></div><div class="a" style="left:951px;top:28px;width:2px;height:2px;background:#6a9955;opacity:0.45"></div><div class="a" style="left:954px;top:28px;width:8px;height:2px;background:#6a9955;opacity:0.45"></div><div class="a" style="left:963px;top:28px;width:5px;height:2px;background:#6a9955;opacity:0.45"></div><div class="a" style="left:969px;top:28px;width:4px;height:2px;background:#6a9955;opacity:0.45"></div><div class="a" style="left:974px;top:28px;width:4px;height:2px;background:#6a9955;opacity:0.45"></div><div class="a" style="left:951px;top:30px;width:9px;height:2px;background:#569cd6;opacity:0.45"></div><div class="a" style="left:961px;top:30px;width:6px;height:2px;background:#9cdcfe;opacity:0.45"></div><div class="a" style="left:968px;top:30px;width:1px;height:2px;background:#d4d4d4;opacity:0.45"></div><div class="a" style="left:970px;top:30px;width:11px;height:2px;background:#ce9178;opacity:0.45"></div><div class="a" style="left:981px;top:30px;width:1px;height:2px;background:#d4d4d4;opacity:0.45"></div><div class="a" style="left:951px;top:32px;width:9px;height:2px;background:#569cd6;opacity:0.45"></div><div class="a" style="left:961px;top:32px;width:5px;height:2px;background:#9cdcfe;opacity:0.45"></div><div class="a" style="left:967px;top:32px;width:1px;height:2px;background:#d4d4d4;opacity:0.45"></div><div class="a" style="left:969px;top:32px;width:11px;height:2px;background:#ce9178;opacity:0.45"></div><div class="a" style="left:980px;top:32px;width:1px;height:2px;background:#d4d4d4;opacity:0.45"></div><div class="a" style="left:951px;top:34px;width:9px;height:2px;background:#569cd6;opacity:0.45"></div><div class="a" style="left:961px;top:34px;width:10px;height:2px;background:#9cdcfe;opacity:0.45"></div><div class="a" style="left:972px;top:34px;width:1px;height:2px;background:#d4d4d4;opacity:0.45"></div><div class="a" style="left:974px;top:34px;width:17px;height:2px;background:#ce9178;opacity:0.45"></div><div class="a" style="left:991px;top:34px;width:1px;height:2px;background:#d4d4d4;opacity:0.45"></div><div class="a" style="left:947px;top:38px;width:30px;height:2px;background:#2f67a0"></div><div class="a" style="left:951px;top:38px;width:6px;height:2px;background:#569cd6;opacity:0.16"></div><div class="a" style="left:958px;top:38px;width:8px;height:2px;background:#569cd6;opacity:0.16"></div><div class="a" style="left:967px;top:38px;width:7px;height:2px;background:#dcdcaa;opacity:0.16"></div><div class="a" style="left:974px;top:38px;width:2px;height:2px;background:#da70d6;opacity:0.16"></div><div class="a" style="left:947px;top:40px;width:6px;height:2px;background:#2f67a0"></div><div class="a" style="left:951px;top:40px;width:1px;height:2px;background:#da70d6;opacity:0.16"></div><div class="a" style="left:947px;top:42px;width:40px;height:2px;background:#2f67a0"></div><div class="a" style="left:955px;top:42px;width:5px;height:2px;background:#9cdcfe;opacity:0.16"></div><div class="a" style="left:960px;top:42px;width:1px;height:2px;background:#179fff;opacity:0.16"></div><div class="a" style="left:961px;top:42px;width:7px;height:2px;background:#ce9178;opacity:0.16"></div><div class="a" style="left:968px;top:42px;width:1px;height:2px;background:#179fff;opacity:0.16"></div><div class="a" style="left:970px;top:42px;width:1px;height:2px;background:#d4d4d4;opacity:0.16"></div><div class="a" style="left:972px;top:42px;width:7px;height:2px;background:#ce9178;opacity:0.16"></div><div class="a" style="left:980px;top:42px;width:5px;height:2px;background:#ce9178;opacity:0.16"></div><div class="a" style="left:985px;top:42px;width:1px;height:2px;background:#d4d4d4;opacity:0.16"></div><div class="a" style="left:947px;top:44px;width:35px;height:2px;background:#2f67a0"></div><div class="a" style="left:955px;top:44px;width:5px;height:2px;background:#9cdcfe;opacity:0.16"></div><div class="a" style="left:960px;top:44px;width:1px;height:2px;background:#179fff;opacity:0.16"></div><div class="a" style="left:961px;top:44px;width:6px;height:2px;background:#ce9178;opacity:0.16"></div><div class="a" style="left:967px;top:44px;width:1px;height:2px;background:#179fff;opacity:0.16"></div><div class="a" style="left:969px;top:44px;width:1px;height:2px;background:#d4d4d4;opacity:0.16"></div><div class="a" style="left:971px;top:44px;width:9px;height:2px;background:#ce9178;opacity:0.16"></div><div class="a" style="left:980px;top:44px;width:1px;height:2px;background:#d4d4d4;opacity:0.16"></div><div class="a" style="left:947px;top:46px;width:68px;height:2px;background:#2f67a0"></div><div class="a" style="left:955px;top:46px;width:2px;height:2px;background:#6a9955;opacity:0.16"></div><div class="a" style="left:958px;top:46px;width:5px;height:2px;background:#6a9955;opacity:0.16"></div><div class="a" style="left:964px;top:46px;width:4px;height:2px;background:#6a9955;opacity:0.16"></div><div class="a" style="left:969px;top:46px;width:10px;height:2px;background:#6a9955;opacity:0.16"></div><div class="a" style="left:980px;top:46px;width:5px;height:2px;background:#6a9955;opacity:0.16"></div><div class="a" style="left:986px;top:46px;width:5px;height:2px;background:#6a9955;opacity:0.16"></div><div class="a" style="left:992px;top:46px;width:4px;height:2px;background:#6a9955;opacity:0.16"></div><div class="a" style="left:997px;top:46px;width:4px;height:2px;background:#6a9955;opacity:0.16"></div><div class="a" style="left:1002px;top:46px;width:6px;height:2px;background:#6a9955;opacity:0.16"></div><div class="a" style="left:1009px;top:46px;width:5px;height:2px;background:#6a9955;opacity:0.16"></div><div class="a" style="left:947px;top:48px;width:92px;height:2px;background:#2f67a0"></div><div class="a" style="left:955px;top:48px;width:5px;height:2px;background:#9cdcfe;opacity:0.16"></div><div class="a" style="left:960px;top:48px;width:1px;height:2px;background:#179fff;opacity:0.16"></div><div class="a" style="left:961px;top:48px;width:7px;height:2px;background:#ce9178;opacity:0.16"></div><div class="a" style="left:968px;top:48px;width:1px;height:2px;background:#179fff;opacity:0.16"></div><div class="a" style="left:970px;top:48px;width:1px;height:2px;background:#d4d4d4;opacity:0.16"></div><div class="a" style="left:972px;top:48px;width:4px;height:2px;background:#4ec9b0;opacity:0.16"></div><div class="a" style="left:976px;top:48px;width:2px;height:2px;background:#d4d4d4;opacity:0.16"></div><div class="a" style="left:978px;top:48px;width:5px;height:2px;background:#dcdcaa;opacity:0.16"></div><div class="a" style="left:983px;top:48px;width:1px;height:2px;background:#179fff;opacity:0.16"></div><div class="a" style="left:984px;top:48px;width:9px;height:2px;background:#ce9178;opacity:0.16"></div><div class="a" style="left:993px;top:48px;width:1px;height:2px;background:#d4d4d4;opacity:0.16"></div><div class="a" style="left:995px;top:48px;width:4px;height:2px;background:#4ec9b0;opacity:0.16"></div><div class="a" style="left:999px;top:48px;width:2px;height:2px;background:#d4d4d4;opacity:0.16"></div><div class="a" style="left:1001px;top:48px;width:2px;height:2px;background:#dcdcaa;opacity:0.16"></div><div class="a" style="left:1003px;top:48px;width:2px;height:2px;background:#ffd700;opacity:0.16"></div><div class="a" style="left:1005px;top:48px;width:1px;height:2px;background:#179fff;opacity:0.16"></div><div class="a" style="left:1006px;top:48px;width:2px;height:2px;background:#d4d4d4;opacity:0.16"></div><div class="a" style="left:1008px;top:48px;width:4px;height:2px;background:#dcdcaa;opacity:0.16"></div><div class="a" style="left:1012px;top:48px;width:1px;height:2px;background:#179fff;opacity:0.16"></div><div class="a" style="left:1013px;top:48px;width:6px;height:2px;background:#ce9178;opacity:0.16"></div><div class="a" style="left:1019px;top:48px;width:1px;height:2px;background:#179fff;opacity:0.16"></div><div class="a" style="left:1020px;top:48px;width:2px;height:2px;background:#d4d4d4;opacity:0.16"></div><div class="a" style="left:1022px;top:48px;width:6px;height:2px;background:#dcdcaa;opacity:0.16"></div><div class="a" style="left:1028px;top:48px;width:2px;height:2px;background:#179fff;opacity:0.16"></div><div class="a" style="left:1030px;top:48px;width:2px;height:2px;background:#d4d4d4;opacity:0.16"></div><div class="a" style="left:1032px;top:48px;width:3px;height:2px;background:#dcdcaa;opacity:0.16"></div><div class="a" style="left:1035px;top:48px;width:2px;height:2px;background:#179fff;opacity:0.16"></div><div class="a" style="left:1037px;top:48px;width:1px;height:2px;background:#d4d4d4;opacity:0.16"></div><div class="a" style="left:947px;top:50px;width:1px;height:2px;background:#3a6ea5"></div><div class="a" style="left:947px;top:52px;width:47px;height:2px;background:#2f67a0"></div><div class="a" style="left:955px;top:52px;width:6px;height:2px;background:#c586c0;opacity:0.16"></div><div class="a" style="left:962px;top:52px;width:4px;height:2px;background:#dcdcaa;opacity:0.16"></div><div class="a" style="left:966px;top:52px;width:1px;height:2px;background:#179fff;opacity:0.16"></div><div class="a" style="left:967px;top:52px;width:17px;height:2px;background:#ce9178;opacity:0.16"></div><div class="a" style="left:984px;top:52px;width:1px;height:2px;background:#d4d4d4;opacity:0.16"></div><div class="a" style="left:986px;top:52px;width:5px;height:2px;background:#9cdcfe;opacity:0.16"></div><div class="a" style="left:991px;top:52px;width:1px;height:2px;background:#179fff;opacity:0.16"></div><div class="a" style="left:992px;top:52px;width:1px;height:2px;background:#d4d4d4;opacity:0.16"></div><div class="a" style="left:947px;top:54px;width:5px;height:2px;background:#2f67a0"></div><div class="a" style="left:951px;top:54px;width:1px;height:2px;background:#da70d6;opacity:0.16"></div><div class="a" style="left:951px;top:58px;width:6px;height:2px;background:#569cd6;opacity:0.45"></div><div class="a" style="left:958px;top:58px;width:8px;height:2px;background:#569cd6;opacity:0.45"></div><div class="a" style="left:967px;top:58px;width:5px;height:2px;background:#dcdcaa;opacity:0.45"></div><div class="a" style="left:972px;top:58px;width:2px;height:2px;background:#da70d6;opacity:0.45"></div><div class="a" style="left:951px;top:60px;width:1px;height:2px;background:#da70d6;opacity:0.45"></div><div class="a" style="left:955px;top:62px;width:2px;height:2px;background:#6a9955;opacity:0.45"></div><div class="a" style="left:958px;top:62px;width:9px;height:2px;background:#6a9955;opacity:0.45"></div><div class="a" style="left:968px;top:62px;width:5px;height:2px;background:#6a9955;opacity:0.45"></div><div class="a" style="left:974px;top:62px;width:5px;height:2px;background:#6a9955;opacity:0.45"></div><div class="a" style="left:980px;top:62px;width:11px;height:2px;background:#6a9955;opacity:0.45"></div><div class="a" style="left:992px;top:62px;width:2px;height:2px;background:#6a9955;opacity:0.45"></div><div class="a" style="left:995px;top:62px;width:4px;height:2px;background:#6a9955;opacity:0.45"></div><div class="a" style="left:955px;top:64px;width:5px;height:2px;background:#9cdcfe;opacity:0.45"></div><div class="a" style="left:960px;top:64px;width:1px;height:2px;background:#179fff;opacity:0.45"></div><div class="a" style="left:961px;top:64px;width:7px;height:2px;background:#ce9178;opacity:0.45"></div><div class="a" style="left:968px;top:64px;width:1px;height:2px;background:#179fff;opacity:0.45"></div><div class="a" style="left:970px;top:64px;width:1px;height:2px;background:#d4d4d4;opacity:0.45"></div><div class="a" style="left:972px;top:64px;width:5px;height:2px;background:#569cd6;opacity:0.45"></div><div class="a" style="left:977px;top:64px;width:2px;height:2px;background:#d4d4d4;opacity:0.45"></div><div class="a" style="left:979px;top:64px;width:5px;height:2px;background:#9cdcfe;opacity:0.45"></div><div class="a" style="left:984px;top:64px;width:1px;height:2px;background:#d4d4d4;opacity:0.45"></div><div class="a" style="left:955px;top:66px;width:5px;height:2px;background:#9cdcfe;opacity:0.45"></div><div class="a" style="left:960px;top:66px;width:1px;height:2px;background:#179fff;opacity:0.45"></div><div class="a" style="left:961px;top:66px;width:6px;height:2px;background:#ce9178;opacity:0.45"></div><div class="a" style="left:967px;top:66px;width:1px;height:2px;background:#179fff;opacity:0.45"></div><div class="a" style="left:969px;top:66px;width:1px;height:2px;background:#d4d4d4;opacity:0.45"></div><div class="a" style="left:971px;top:66px;width:5px;height:2px;background:#569cd6;opacity:0.45"></div><div class="a" style="left:976px;top:66px;width:2px;height:2px;background:#d4d4d4;opacity:0.45"></div><div class="a" style="left:978px;top:66px;width:4px;height:2px;background:#9cdcfe;opacity:0.45"></div><div class="a" style="left:982px;top:66px;width:1px;height:2px;background:#d4d4d4;opacity:0.45"></div><div class="a" style="left:955px;top:70px;width:2px;height:2px;background:#6a9955;opacity:0.45"></div><div class="a" style="left:958px;top:70px;width:9px;height:2px;background:#6a9955;opacity:0.45"></div><div class="a" style="left:968px;top:70px;width:4px;height:2px;background:#6a9955;opacity:0.45"></div><div class="a" style="left:973px;top:70px;width:4px;height:2px;background:#6a9955;opacity:0.45"></div><div class="a" style="left:978px;top:70px;width:8px;height:2px;background:#6a9955;opacity:0.45"></div><div class="a" style="left:955px;top:72px;width:5px;height:2px;background:#9cdcfe;opacity:0.45"></div><div class="a" style="left:960px;top:72px;width:1px;height:2px;background:#179fff;opacity:0.45"></div><div class="a" style="left:961px;top:72px;width:13px;height:2px;background:#ce9178;opacity:0.45"></div><div class="a" style="left:974px;top:72px;width:1px;height:2px;background:#179fff;opacity:0.45"></div><div class="a" style="left:976px;top:72px;width:1px;height:2px;background:#d4d4d4;opacity:0.45"></div><div class="a" style="left:978px;top:72px;width:4px;height:2px;background:#4ec9b0;opacity:0.45"></div><div class="a" style="left:982px;top:72px;width:2px;height:2px;background:#d4d4d4;opacity:0.45"></div><div class="a" style="left:984px;top:72px;width:5px;height:2px;background:#dcdcaa;opacity:0.45"></div><div class="a" style="left:989px;top:72px;width:1px;height:2px;background:#179fff;opacity:0.45"></div><div class="a" style="left:990px;top:72px;width:8px;height:2px;background:#ce9178;opacity:0.45"></div><div class="a" style="left:998px;top:72px;width:1px;height:2px;background:#d4d4d4;opacity:0.45"></div><div class="a" style="left:1000px;top:72px;width:10px;height:2px;background:#ce9178;opacity:0.45"></div><div class="a" style="left:1010px;top:72px;width:1px;height:2px;background:#179fff;opacity:0.45"></div><div class="a" style="left:1011px;top:72px;width:2px;height:2px;background:#d4d4d4;opacity:0.45"></div><div class="a" style="left:1013px;top:72px;width:5px;height:2px;background:#dcdcaa;opacity:0.45"></div><div class="a" style="left:1018px;top:72px;width:2px;height:2px;background:#179fff;opacity:0.45"></div><div class="a" style="left:1020px;top:72px;width:1px;height:2px;background:#d4d4d4;opacity:0.45"></div><div class="a" style="left:955px;top:74px;width:5px;height:2px;background:#9cdcfe;opacity:0.45"></div><div class="a" style="left:960px;top:74px;width:1px;height:2px;background:#179fff;opacity:0.45"></div><div class="a" style="left:961px;top:74px;width:13px;height:2px;background:#ce9178;opacity:0.45"></div><div class="a" style="left:974px;top:74px;width:1px;height:2px;background:#179fff;opacity:0.45"></div><div class="a" style="left:976px;top:74px;width:1px;height:2px;background:#d4d4d4;opacity:0.45"></div><div class="a" style="left:978px;top:74px;width:4px;height:2px;background:#4ec9b0;opacity:0.45"></div><div class="a" style="left:982px;top:74px;width:2px;height:2px;background:#d4d4d4;opacity:0.45"></div><div class="a" style="left:984px;top:74px;width:5px;height:2px;background:#dcdcaa;opacity:0.45"></div><div class="a" style="left:989px;top:74px;width:1px;height:2px;background:#179fff;opacity:0.45"></div><div class="a" style="left:990px;top:74px;width:8px;height:2px;background:#ce9178;opacity:0.45"></div><div class="a" style="left:998px;top:74px;width:1px;height:2px;background:#d4d4d4;opacity:0.45"></div><div class="a" style="left:1000px;top:74px;width:10px;height:2px;background:#ce9178;opacity:0.45"></div><div class="a" style="left:1010px;top:74px;width:1px;height:2px;background:#179fff;opacity:0.45"></div><div class="a" style="left:1011px;top:74px;width:2px;height:2px;background:#d4d4d4;opacity:0.45"></div><div class="a" style="left:1013px;top:74px;width:5px;height:2px;background:#dcdcaa;opacity:0.45"></div><div class="a" style="left:1018px;top:74px;width:2px;height:2px;background:#179fff;opacity:0.45"></div><div class="a" style="left:1020px;top:74px;width:1px;height:2px;background:#d4d4d4;opacity:0.45"></div><div class="a" style="left:955px;top:78px;width:2px;height:2px;background:#6a9955;opacity:0.45"></div><div class="a" style="left:958px;top:78px;width:11px;height:2px;background:#6a9955;opacity:0.45"></div><div class="a" style="left:970px;top:78px;width:4px;height:2px;background:#6a9955;opacity:0.45"></div><div class="a" style="left:975px;top:78px;width:6px;height:2px;background:#6a9955;opacity:0.45"></div><div class="a" style="left:982px;top:78px;width:4px;height:2px;background:#6a9955;opacity:0.45"></div><div class="a" style="left:955px;top:80px;width:6px;height:2px;background:#c586c0;opacity:0.45"></div><div class="a" style="left:962px;top:80px;width:4px;height:2px;background:#dcdcaa;opacity:0.45"></div><div class="a" style="left:966px;top:80px;width:1px;height:2px;background:#179fff;opacity:0.45"></div><div class="a" style="left:967px;top:80px;width:5px;height:2px;background:#569cd6;opacity:0.45"></div><div class="a" style="left:972px;top:80px;width:2px;height:2px;background:#d4d4d4;opacity:0.45"></div><div class="a" style="left:974px;top:80px;width:9px;height:2px;background:#9cdcfe;opacity:0.45"></div><div class="a" style="left:984px;top:80px;width:1px;height:2px;background:#d4d4d4;opacity:0.45"></div><div class="a" style="left:986px;top:80px;width:8px;height:2px;background:#ce9178;opacity:0.45"></div><div class="a" style="left:994px;top:80px;width:1px;height:2px;background:#d4d4d4;opacity:0.45"></div><div class="a" style="left:996px;top:80px;width:5px;height:2px;background:#9cdcfe;opacity:0.45"></div><div class="a" style="left:1001px;top:80px;width:1px;height:2px;background:#179fff;opacity:0.45"></div><div class="a" style="left:1002px;top:80px;width:1px;height:2px;background:#d4d4d4;opacity:0.45"></div><div class="a" style="left:951px;top:82px;width:1px;height:2px;background:#da70d6;opacity:0.45"></div><div class="a" style="left:947px;top:84px;width:1px;height:2px;background:#ffd700;opacity:0.45"></div><div class="a" style="left:1045px;top:0;width:14px;height:652px;background:#1f1f1f;border-left:1px solid #1b1b1b"></div><div class="a" style="left:1045px;top:4px;width:14px;height:262px;background:#4a4a4a"></div><div class="a" style="left:1045px;top:167px;width:14px;height:2px;background:#8a8a8a"></div></div>
<div id="status"><div class="a" style="left:0;top:0;width:34px;height:21px;background:#0078d4"></div><svg class="a" style="left:12px;top:4px" width="11" height="13" viewBox="0 0 11 13"><path d="M0.8 5 L4.8 8.8 L0.8 12.4 M10 0.6 L6 4.4 L10 8" fill="none" stroke="#ffffff" stroke-width="1.2"/></svg><svg class="a" style="left:42px;top:4px" width="14" height="14" viewBox="0 0 14 14"><circle cx="7" cy="7" r="5.9" fill="none" stroke="#cccccc" stroke-width="1.1"/><path d="M4.6 4.6 L9.4 9.4 M9.4 4.6 L4.6 9.4" stroke="#cccccc" stroke-width="1.1"/></svg><div class="st" id="s_e0" style="left:59.8px">0</div><svg class="a" style="left:69.5px;top:4px" width="13" height="13" viewBox="0 0 13 13"><path d="M6.5 1.2 L12.2 11.8 H0.8 Z" fill="none" stroke="#cccccc" stroke-width="1.1" stroke-linejoin="round"/><path d="M6.5 4.8 V8.4 M6.5 9.4 V10.6" stroke="#cccccc" stroke-width="1.1"/></svg><div class="st" id="s_w0" style="left:86.8px">0</div><svg class="a" style="left:111.5px;top:3.5px" width="10" height="14" viewBox="0 0 10 14"><path d="M4.6 0.8 H8.2 L6.2 5.2 H9 L2.4 13.2 L3.8 7.6 H1.2 Z" fill="none" stroke="#cccccc" stroke-width="1.05" stroke-linejoin="round"/></svg><div class="st" id="s_ln" style="left:810.5px;letter-spacing:-0.226px">Ln 20, Col 1 (324 selected)</div><div class="st" id="s_sp" style="left:964.5px;letter-spacing:-0.533px">Spaces: 4</div><div class="st" id="s_utf" style="left:1029.5px;letter-spacing:-0.440px">UTF-8</div><div class="st" id="s_lf" style="left:1077px;letter-spacing:-1.700px">LF</div><div class="st" id="s_php" style="left:1125.5px;letter-spacing:-1.167px">PHP</div><div class="st" id="s_gl" style="left:1209.5px;letter-spacing:-0.400px">Go Live</div><div class="st" id="s_pr" style="left:1282px;letter-spacing:-0.088px">Prettier</div><div class="st" id="s_br" style="left:1105.5px;font-size:11px;letter-spacing:2px">{}</div><svg class="a" style="left:1162px;top:3.5px" width="16" height="14" viewBox="0 0 16 14">
<rect x="1.4" y="1" width="5.8" height="5.6" rx="2.2" fill="none" stroke="#cccccc" stroke-width="1.3"/><rect x="8.8" y="1" width="5.8" height="5.6" rx="2.2" fill="none" stroke="#cccccc" stroke-width="1.3"/>
<path d="M1.2 5.4 Q0.6 6.6 0.7 9 Q2.4 12.6 8 12.8 Q13.6 12.6 15.3 9 Q15.4 6.6 14.8 5.4" fill="none" stroke="#cccccc" stroke-width="1.3"/>
<path d="M5.8 8.4 V10.2 M10.2 8.4 V10.2" stroke="#cccccc" stroke-width="1.4"/></svg><svg class="a" style="left:1194px;top:3.5px" width="12" height="14" viewBox="0 0 12 14"><circle cx="6" cy="5.6" r="4.9" fill="none" stroke="#cccccc" stroke-width="1.1"/><circle cx="6" cy="5.6" r="2" fill="none" stroke="#cccccc" stroke-width="1.1"/><path d="M4.6 8 L4 13.4 H8 L7.4 8" fill="#181818" stroke="#cccccc" stroke-width="1.1" stroke-linejoin="round"/></svg><svg class="a" style="left:1265.5px;top:4px" width="13" height="13" viewBox="0 0 13 13"><circle cx="6.5" cy="6.5" r="5.6" fill="none" stroke="#cccccc" stroke-width="1.1"/><path d="M2.6 10.4 L10.4 2.6" stroke="#cccccc" stroke-width="1.1"/></svg><svg class="a" style="left:1338px;top:3.5px" width="13" height="14" viewBox="0 0 13 14"><path d="M6.5 1 Q10.4 1 10.4 5.4 V8.6 L11.8 10.8 H1.2 L2.6 8.6 V5.4 Q2.6 1 6.5 1 Z" fill="none" stroke="#cccccc" stroke-width="1.1" stroke-linejoin="round"/><path d="M5 11 Q5 12.8 6.5 12.8 Q8 12.8 8 11" fill="none" stroke="#cccccc" stroke-width="1.1"/></svg></div>
</body></html>
